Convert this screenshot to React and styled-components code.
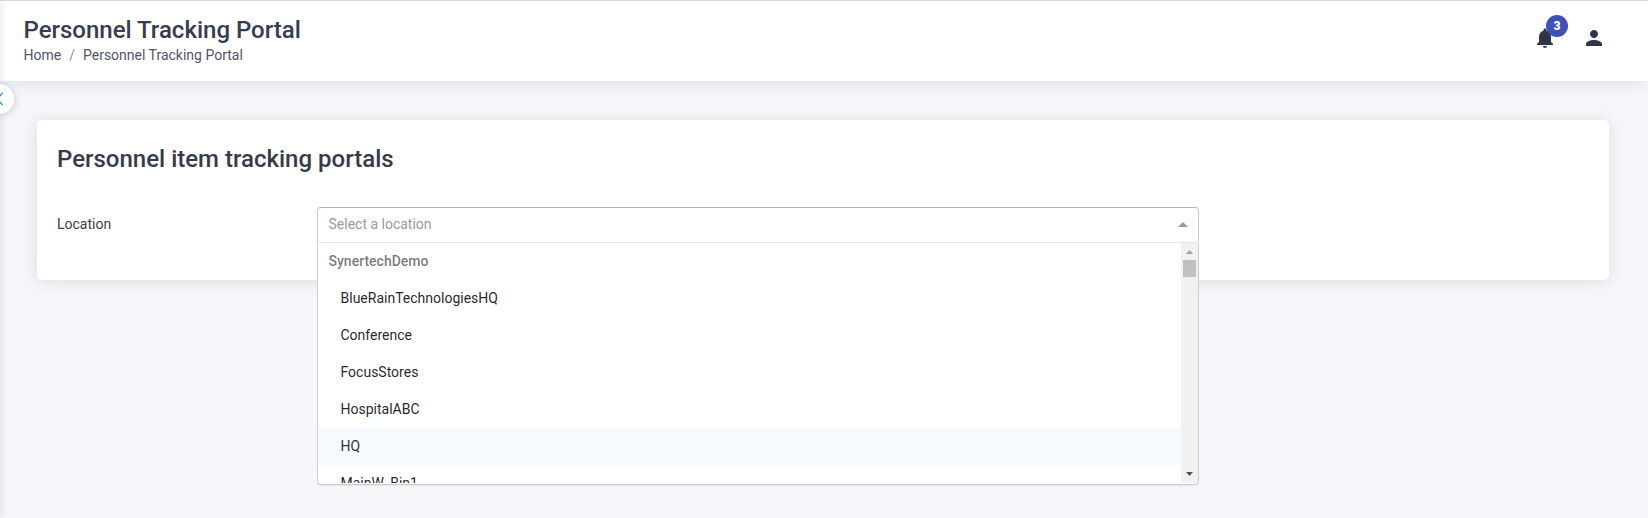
import React from 'react';
import styled, { createGlobalStyle } from 'styled-components';

const GlobalStyle = createGlobalStyle`
  * { box-sizing: border-box; }
  body {
    margin: 0;
    background: #f5f6fa;
    font-family: Roboto, "Liberation Sans", sans-serif;
    font-size: 14px;
    line-height: 20px;
    color: #363c4f;
    overflow: hidden;
  }
  h1, h2 { margin: 0; font-weight: 500; font-size: 24px; line-height: 28px; }
`;

const Page = styled.div`
  position: relative;
  height: 518px;
  overflow: hidden;
`;

const SideShadow = styled.div`
  position: absolute;
  top: 1px;
  bottom: 0;
  left: -10px;
  width: 10px;
  box-shadow: 0 0 10px rgba(0, 0, 0, 0.12);
`;

const Header = styled.header`
  display: flex;
  justify-content: space-between;
  height: 81px;
  padding: 15px 42px 0 23.5px;
  border-top: 1px solid #d9d9d9;
  background: #fff;
  box-shadow: 0 1px 15px rgba(0, 0, 0, 0.1);
`;

const Title = styled.h1`
  color: #363d51;
`;

const Breadcrumb = styled.nav`
  display: flex;
  gap: 8px;
  margin-top: 1px;
  color: #50566a;
`;

const Slash = styled.span`
  color: #868b98;
`;

const Actions = styled.div`
  display: flex;
  gap: 25px;
  padding-top: 10px;
`;

const IconButton = styled.div`
  position: relative;
  width: 24px;
  height: 24px;
  color: #2f3447;

  svg { display: block; fill: currentColor; }
`;

const Badge = styled.span`
  position: absolute;
  top: -11px;
  left: 13px;
  width: 22px;
  height: 22px;
  border-radius: 50%;
  background: #3f51b5;
  color: #fff;
  font-size: 12px;
  font-weight: 900;
  line-height: 22px;
  text-align: center;
`;

const Collapse = styled.div`
  position: absolute;
  top: 84px;
  left: -16px;
  width: 30px;
  height: 30px;
  border-radius: 50%;
  background: #fff;
  box-shadow: 2px 1px 7px rgba(0, 0, 0, 0.13);

  svg { display: block; fill: none; stroke: #2f8ff5; stroke-width: 1.4; }
`;

const Card = styled.section`
  width: 1572px;
  height: 160px;
  margin: 39px 0 0 37px;
  padding: 25px 20px 0;
  border-radius: 5px;
  background: #fff;
  box-shadow: 0 1px 15px rgba(0, 0, 0, 0.1);
`;

const CardTitle = styled.h2`
  color: #363b4b;
`;

const Field = styled.div`
  display: flex;
  margin-top: 34px;
`;

const Label = styled.label`
  width: 260px;
  padding-top: 7px;
  color: #3c3c44;
`;

const Select = styled.div`
  position: relative;
  width: 882px;
  height: 36px;
`;

const SelectBox = styled.div`
  display: flex;
  justify-content: space-between;
  align-items: center;
  height: 36px;
  padding: 0 10px 2px 10.5px;
  border: 1px solid;
  border-color: #b3b3b3 #ccc #e6e6e6;
  border-radius: 4px 4px 0 0;
  background: #fff;
  color: #999;
`;

const Arrow = styled.svg`
  display: block;
  fill: #999;
`;

const Menu = styled.div`
  position: absolute;
  top: 36px;
  left: 0;
  display: flex;
  width: 882px;
  height: 242px;
  border: 1px solid #ccc;
  border-top: 0;
  border-radius: 0 0 4px 4px;
  background: #fff;
  box-shadow: 0 1px 0 rgba(0, 0, 0, 0.06);
`;

const Options = styled.div`
  flex: 1;
  height: 240px;
  overflow: hidden;
`;

const Group = styled.div`
  height: 37px;
  padding: 8px 10.5px;
  color: rgba(0, 0, 0, 0.54);
  font-weight: 500;
`;

const Option = styled.div`
  height: 37px;
  padding: 8px 10px 8px 22.5px;
  background: ${({ $marked }) => ($marked ? '#f5faff' : '#fff')};
  color: ${({ $marked }) => ($marked ? '#333' : 'rgba(0, 0, 0, 0.87)')};
`;

const Scrollbar = styled.div`
  display: flex;
  flex-direction: column;
  align-items: center;
  width: 17px;
  height: 240px;
  background: #f1f1f1;
`;

const ScrollButton = styled.div`
  display: flex;
  align-items: center;
  justify-content: center;
  height: 17px;
  margin-top: ${({ $end }) => ($end ? 'auto' : '0')};
  padding-bottom: ${({ $end }) => ($end ? '2px' : '0')};

  svg { display: block; fill: ${({ $end }) => ($end ? '#505050' : '#a3a3a3')}; }
`;

const Thumb = styled.div`
  width: 13px;
  height: 17px;
  background: #c1c1c1;
`;

const locations = ['BlueRainTechnologiesHQ', 'Conference', 'FocusStores', 'HospitalABC', 'HQ', 'MainW_Bin1'];

export default function App() {
  return (
    <>
      <GlobalStyle />
      <Page>
        <Header>
          <div>
            <Title>Personnel Tracking Portal</Title>
            <Breadcrumb>
              <span>Home</span>
              <Slash>/</Slash>
              <span>Personnel Tracking Portal</span>
            </Breadcrumb>
          </div>
          <Actions>
            <IconButton>
              <svg width="24" height="24" viewBox="0 0 24 24">
                <path d="M12 22c1.1 0 2-.9 2-2h-4c0 1.1.89 2 2 2zm6-6v-5c0-3.07-1.64-5.64-4.5-6.32V4c0-.83-.67-1.5-1.5-1.5s-1.5.67-1.5 1.5v.68C7.63 5.36 6 7.92 6 11v5l-2 2v1h16v-1l-2-2z" />
              </svg>
              <Badge>3</Badge>
            </IconButton>
            <IconButton>
              <svg width="24" height="24" viewBox="0 0 24 24">
                <path d="M12 12c2.21 0 4-1.79 4-4s-1.79-4-4-4-4 1.79-4 4 1.79 4 4 4zm0 2c-2.67 0-8 1.34-8 4v2h16v-2c0-2.66-5.33-4-8-4z" />
              </svg>
            </IconButton>
          </Actions>
        </Header>
        <Card>
          <CardTitle>Personnel item tracking portals</CardTitle>
          <Field>
            <Label>Location</Label>
            <Select>
              <SelectBox>
                <span>Select a location</span>
                <Arrow width="10" height="5" viewBox="0 0 10 5">
                  <path d="M0 5 5 0 10 5z" />
                </Arrow>
              </SelectBox>
              <Menu>
                <Options>
                  <Group>SynertechDemo</Group>
                  {locations.map((name) => (
                    <Option key={name} $marked={name === 'HQ'}>{name}</Option>
                  ))}
                </Options>
                <Scrollbar>
                  <ScrollButton>
                    <svg width="7" height="4" viewBox="0 0 7 4"><path d="M0 4 3.5 0 7 4z" /></svg>
                  </ScrollButton>
                  <Thumb />
                  <ScrollButton $end>
                    <svg width="7" height="4" viewBox="0 0 7 4"><path d="M0 0h7L3.5 4z" /></svg>
                  </ScrollButton>
                </Scrollbar>
              </Menu>
            </Select>
          </Field>
        </Card>
        <SideShadow />
        <Collapse>
          <svg width="30" height="30" viewBox="0 0 30 30"><path d="M18.7 9 12.7 15l6 6" /></svg>
        </Collapse>
      </Page>
    </>
  );
}
